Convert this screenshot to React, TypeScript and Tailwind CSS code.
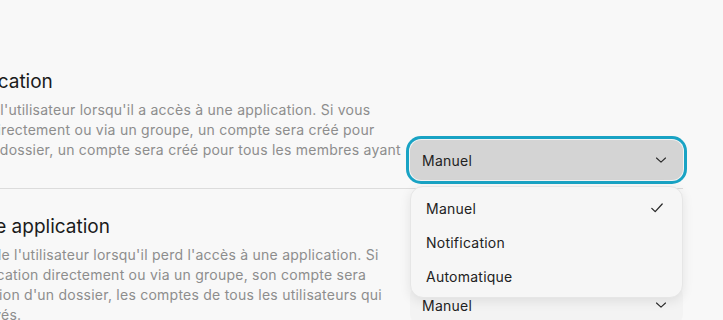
const Chevron = () => (
  <svg width="12" height="8" viewBox="0 0 12 8" fill="none" className="shrink-0">
    <path d="M1.5 2 L6 6.2 L10.5 2" stroke="#2a2a2a" strokeWidth="1.1" strokeLinecap="round" strokeLinejoin="round" />
  </svg>
);

const Check = () => (
  <svg width="14" height="12" viewBox="0 0 14 12" fill="none" className="shrink-0">
    <path d="M1.8 6.4 L5.2 9.6 L12.2 2" stroke="#2a2a2a" strokeWidth="1.3" strokeLinecap="round" strokeLinejoin="round" />
  </svg>
);

const options = ["Manuel", "Notification", "Automatique"];

const SelectBox = ({ open }: { open?: boolean }) => (
  <div className="relative w-[273px] shrink-0">
    <button
      className={
        "flex h-[40px] w-full items-center justify-between rounded-[11px] pl-[12px] pr-[16px] text-[14px] text-[#222] " +
        (open
          ? "bg-[#d4d4d4] ring-[3px] ring-[#19a3c4] ring-offset-[1px] ring-offset-[#f3f3f3]"
          : "bg-[#f3f3f3]")
      }
    >
      <span>Manuel</span>
      <Chevron />
    </button>
    {open && (
      <ul className="absolute left-0 right-0 top-[46px] z-10 rounded-[13px] border border-[#e6e6e6] bg-[#f6f6f6] py-[4px] shadow-[0_3px_12px_rgba(0,0,0,0.09)]">
        {options.map((o, i) => (
          <li key={o} className="flex h-[34px] items-center justify-between pl-[15px] pr-[18px] text-[14px] text-[#222]">
            <span>{o}</span>
            {i === 0 && <Check />}
          </li>
        ))}
      </ul>
    )}
  </div>
);

const Section = ({
  title,
  lines,
  open,
  divider,
}: {
  title: string;
  lines: string[];
  open?: boolean;
  divider?: boolean;
}) => (
  <div className={"flex items-start justify-between gap-4 pt-[24px] pb-[8px] " + (divider ? "border-b border-[#dcdcdc]" : "")}>
    <div className="min-w-0">
      <h2 className="whitespace-nowrap text-[19px] leading-[28px] tracking-normal text-[#1b1b1b]">{title}</h2>
      <div className="mt-[4px] text-[14px] leading-[20px] text-[#8d8d8d]">
        {lines.map((l, i) => (
          <p key={i} className="whitespace-nowrap">
            {l}
          </p>
        ))}
      </div>
    </div>
    <div className="mt-[72px]">
      <SelectBox open={open} />
    </div>
  </div>
);

export default function App() {
  return (
    <div
      className="h-[320px] w-full overflow-hidden bg-[#f8f8f8] tracking-[0.015em]"
      style={{ fontFamily: "Inter, 'Noto Sans', sans-serif" }}
    >
      <div className="-ml-[289px] mr-[40px] pt-[44px]">
        <Section
          divider
          open
          title="Création dès l'accès à une application"
          lines={[
            "Génère automatiquement un compte pour l'utilisateur lorsqu'il a accès à une application. Si vous",
            "affectez cet utilisateur à une application directement ou via un groupe, un compte sera créé pour",
            "lui. Si vous intégrez cette application à un dossier, un compte sera créé pour tous les membres ayant",
          ]}
        />
        <Section
          title="Désactivation dès le retrait d'une application"
          lines={[
            "Désactive automatiquement les comptes de l'utilisateur lorsqu'il perd l'accès à une application. Si",
            "vous supprimez cet utilisateur d'une application directement ou via un groupe, son compte sera",
            "désactivé. Si vous détachez cette application d'un dossier, les comptes de tous les utilisateurs qui",
            "en perdent l'accès seront ensuite désactivés.",
          ]}
        />
      </div>
    </div>
  );
}
